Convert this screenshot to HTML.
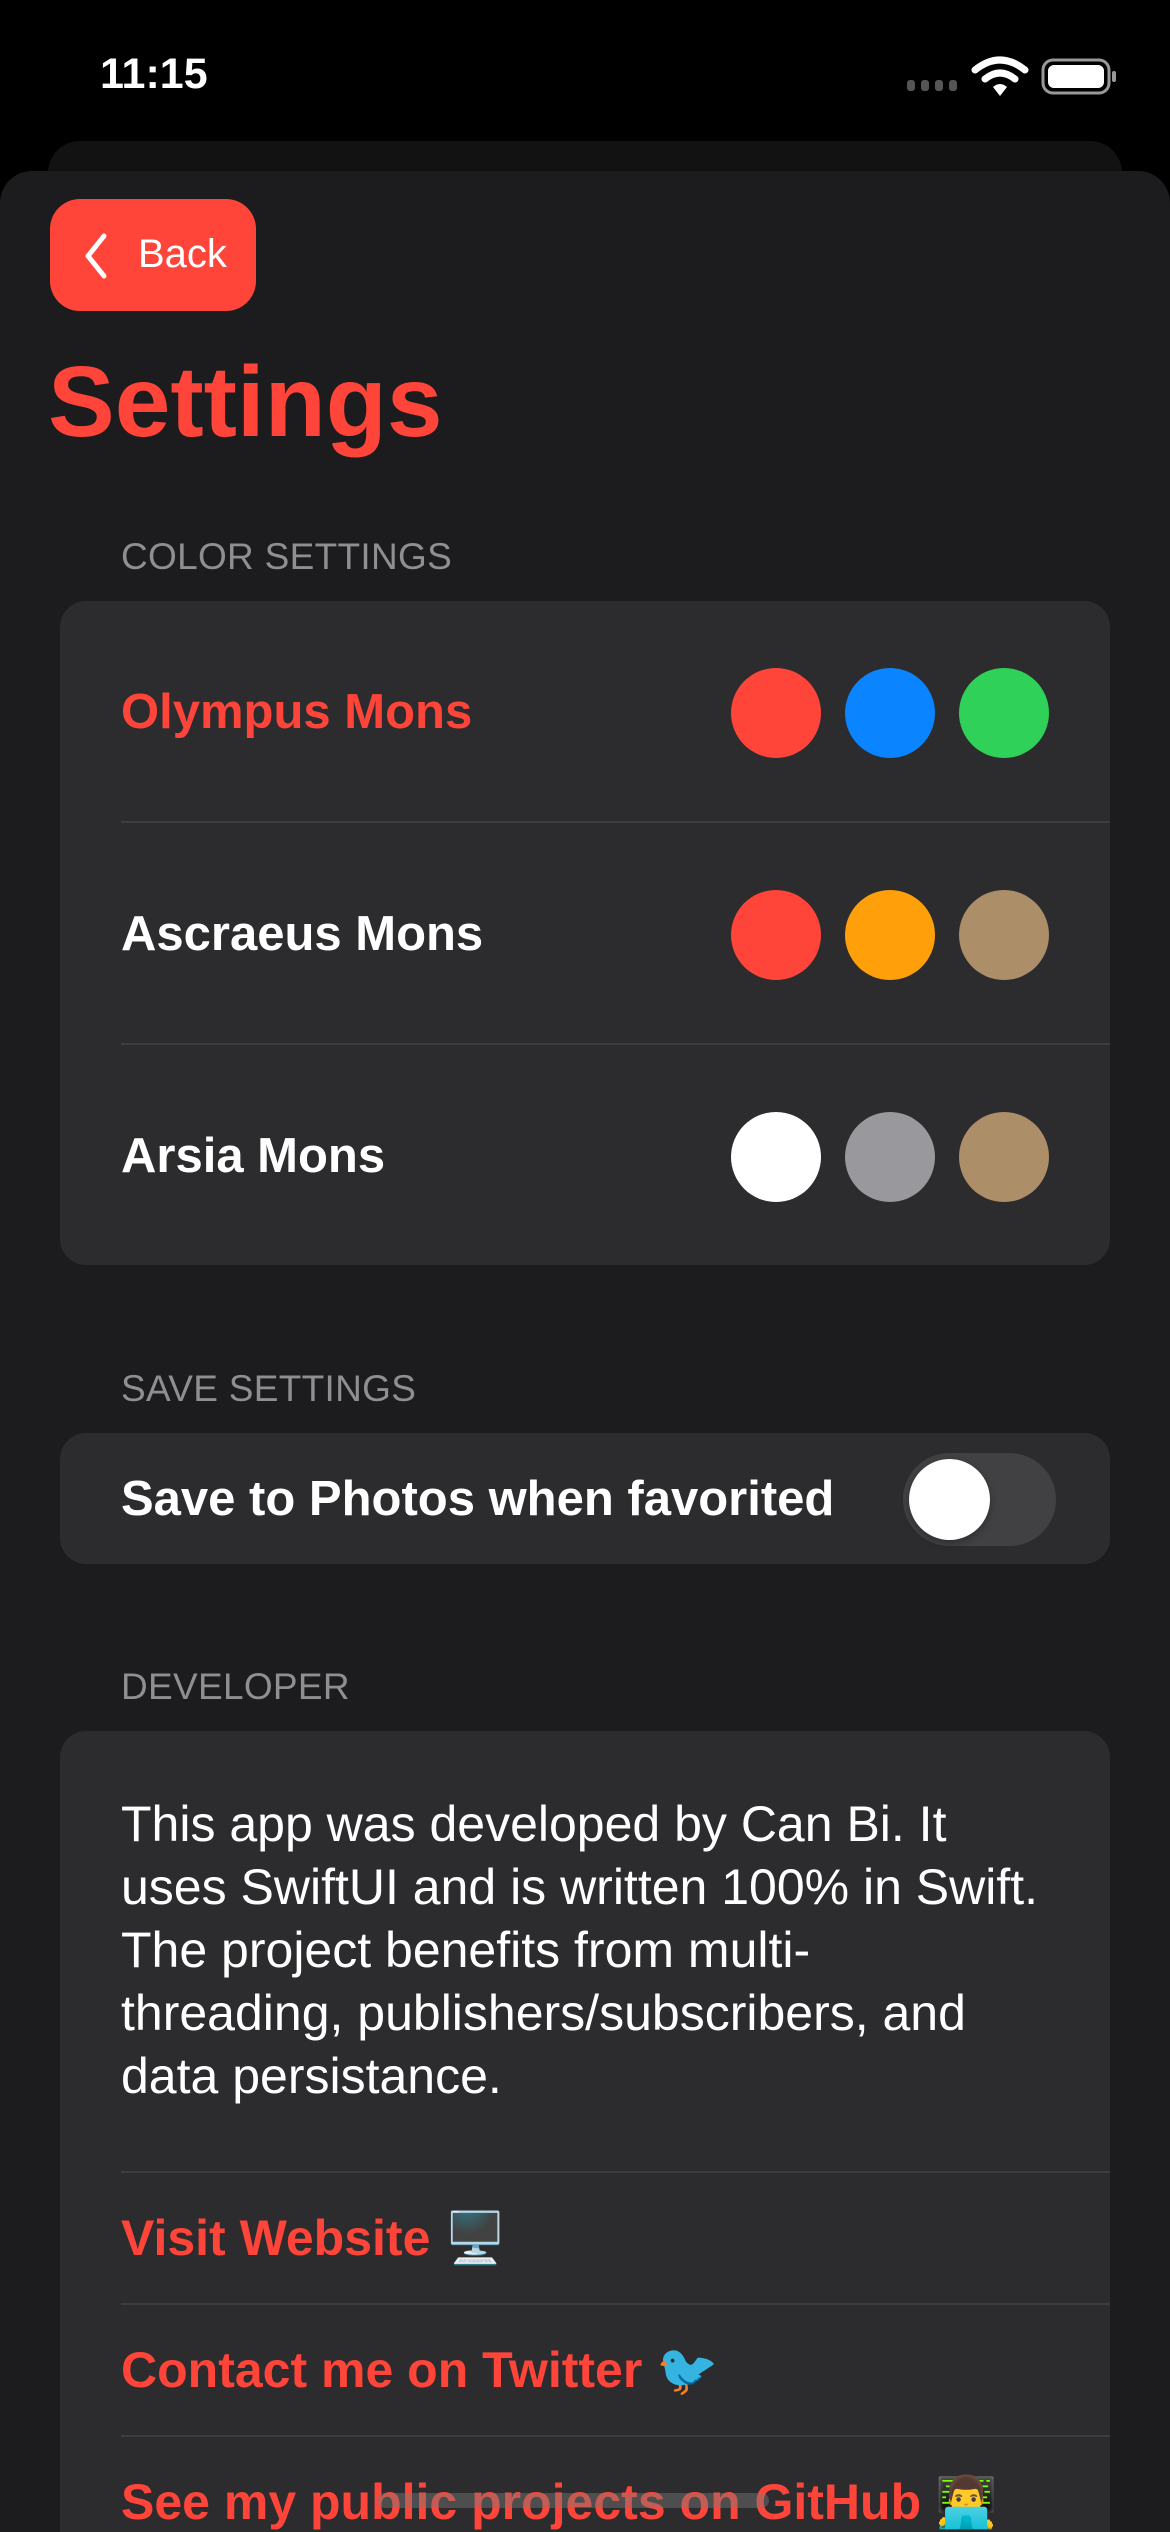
<!DOCTYPE html>
<html style="width:1170px;height:2532px;overflow:hidden"><head><meta charset="utf-8"><style>
*{margin:0;padding:0;box-sizing:border-box}
body{width:1170px;height:2532px;background:#000;position:relative;overflow:hidden;font-family:"Liberation Sans",sans-serif;color:#fff}
.abs{position:absolute}
.sheet0{left:48px;top:141px;width:1074px;height:100px;background:#121212;border-radius:32px 32px 0 0}
.sheet{left:0;top:171px;width:1170px;height:2361px;background:#1c1c1e;border-radius:32px 32px 0 0}
.back{left:50px;top:199px;width:206px;height:112px;background:#ff453a;border-radius:30px}
.hdr{left:121px;font-size:37px;color:#8e8e93;letter-spacing:0.3px}
.card{left:60px;width:1050px;background:#2c2c2e;border-radius:26px}
.row{left:121px;font-size:49px;font-weight:bold;white-space:nowrap}
.lnk{font-size:50px}
.sep{left:121px;width:989px;height:2px;background:#3d3d40}
.dot{width:90px;height:90px;border-radius:50%}
.red{color:#ff453a}
</style></head><body>
<div class="abs" style="left:100px;top:50px;font-size:43px;font-weight:bold">11:15</div>
<svg class="abs" style="left:905px;top:50px" width="215" height="50">
<rect x="2" y="30" width="8" height="11" rx="3" fill="#555"/>
<rect x="16" y="30" width="8" height="11" rx="3" fill="#555"/>
<rect x="30" y="30" width="8" height="11" rx="3" fill="#555"/>
<rect x="44" y="30" width="8" height="11" rx="3" fill="#555"/>
<path d="M70 20 Q95 0 120 20" stroke="#fff" stroke-width="7" fill="none" stroke-linecap="round"/>
<path d="M80 29 Q95 17 110 29" stroke="#fff" stroke-width="7" fill="none" stroke-linecap="round"/>
<path d="M88 37 Q95 31 102 37 L95 46Z" fill="#fff"/>
<rect x="138" y="10" width="66" height="33" rx="10" fill="none" stroke="#999" stroke-width="3"/>
<rect x="143" y="15" width="56" height="23" rx="6" fill="#fff"/>
<rect x="207" y="21" width="4" height="11" rx="2" fill="#999"/>
</svg>
<div class="abs sheet0"></div>
<div class="abs sheet"></div>
<div class="abs back"><svg class="abs" style="left:30px;top:33px" width="30" height="48"><path d="M24 4 L8 24 L24 44" stroke="#fff" stroke-width="5" fill="none" stroke-linecap="round" stroke-linejoin="round"/></svg><div class="abs" style="left:88px;top:33px;font-size:40px">Back</div></div>
<div class="abs red" style="left:48px;top:345px;font-size:100px;font-weight:bold">Settings</div>

<div class="abs hdr" style="top:536px">COLOR SETTINGS</div>
<div class="abs card" style="top:601px;height:664px"></div>
<div class="abs row red" style="top:684px">Olympus Mons</div>
<div class="abs row" style="top:906px">Ascraeus Mons</div>
<div class="abs row" style="top:1128px">Arsia Mons</div>
<div class="abs sep" style="top:821px"></div>
<div class="abs sep" style="top:1043px"></div>
<div class="abs dot" style="left:731px;top:668px;background:#ff453a"></div>
<div class="abs dot" style="left:845px;top:668px;background:#0a84ff"></div>
<div class="abs dot" style="left:959px;top:668px;background:#30d158"></div>
<div class="abs dot" style="left:731px;top:890px;background:#ff453a"></div>
<div class="abs dot" style="left:845px;top:890px;background:#ff9f0a"></div>
<div class="abs dot" style="left:959px;top:890px;background:#ac8e68"></div>
<div class="abs dot" style="left:731px;top:1112px;background:#fff"></div>
<div class="abs dot" style="left:845px;top:1112px;background:#98989d"></div>
<div class="abs dot" style="left:959px;top:1112px;background:#ac8e68"></div>

<div class="abs hdr" style="top:1368px">SAVE SETTINGS</div>
<div class="abs card" style="top:1433px;height:131px"></div>
<div class="abs row" style="top:1471px">Save to Photos when favorited</div>
<div class="abs" style="left:903px;top:1453px;width:153px;height:93px;border-radius:47px;background:#414144"></div>
<div class="abs" style="left:909px;top:1459px;width:81px;height:81px;border-radius:50%;background:#fff;box-shadow:0 3px 8px rgba(0,0,0,.3)"></div>

<div class="abs hdr" style="top:1666px">DEVELOPER</div>
<div class="abs card" style="top:1731px;height:900px"></div>
<div class="abs" style="left:121px;top:1793px;font-size:50px;line-height:63px;white-space:nowrap">This app was developed by Can Bi. It<br>uses SwiftUI and is written 100% in Swift.<br>The project benefits from multi-<br>threading, publishers/subscribers, and<br>data persistance.</div>
<div class="abs sep" style="top:2171px"></div>
<div class="abs sep" style="top:2303px"></div>
<div class="abs sep" style="top:2435px"></div>
<div class="abs row lnk red" style="top:2209px">Visit Website 🖥️</div>
<div class="abs row lnk red" style="top:2341px">Contact me on Twitter 🐦</div>
<div class="abs row lnk red" style="top:2473px">See my public projects on GitHub 👨‍💻</div>
<div class="abs" style="left:377px;top:2493px;width:392px;height:15px;border-radius:8px;background:rgba(120,120,120,.45)"></div>
</body></html>
